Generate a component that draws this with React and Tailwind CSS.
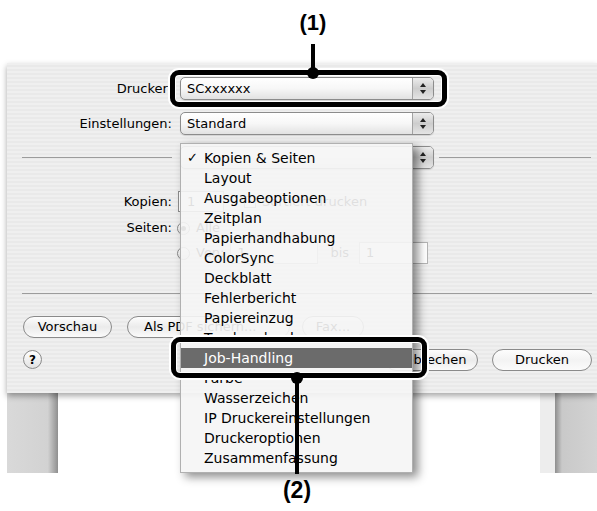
import React from "react";

const menuItems = [
  "Kopien & Seiten",
  "Layout",
  "Ausgabeoptionen",
  "Zeitplan",
  "Papierhandhabung",
  "ColorSync",
  "Deckblatt",
  "Fehlerbericht",
  "Papiereinzug",
  "Tandemdruck",
  "Job-Handling",
  "Farbe",
  "Wasserzeichen",
  "IP Druckereinstellungen",
  "Druckeroptionen",
  "Zusammenfassung",
];

function UpDown() {
  return (
    <svg width="6" height="11" viewBox="0 0 6 11">
      <path d="M3 0 L6 4 L0 4 Z" fill="#222" />
      <path d="M0 7 L6 7 L3 11 Z" fill="#222" />
    </svg>
  );
}

function Popup({ children }) {
  return (
    <div className="flex h-[23px] w-[254px] rounded-[5px] border border-[#8c8c8c] bg-gradient-to-b from-white via-[#f7f7f7] to-[#e2e2e2] shadow-[0_1px_1px_rgba(0,0,0,0.12)]">
      <div className="flex flex-1 items-center pl-[6px] text-[13px]">{children}</div>
      <div className="flex w-[21px] items-center justify-center rounded-r-[4px] border-l border-[#a2a2a2] bg-gradient-to-b from-[#ececec] via-[#cdcdcd] to-[#e4e4e4]">
        <UpDown />
      </div>
    </div>
  );
}

function Pill({ children, className = "" }) {
  return (
    <div
      className={`flex h-[22px] items-center justify-center rounded-full border border-[#8a8a8a] bg-gradient-to-b from-[#fdfdfd] via-[#ebebeb] to-[#fbfbfb] text-[13px] ${className}`}
    >
      {children}
    </div>
  );
}

function Label({ children }) {
  return <div className="w-[165px] text-right text-[13px]">{children}</div>;
}

function Radio({ on }) {
  return (
    <div className="flex h-[13px] w-[13px] items-center justify-center rounded-full border border-[#888] bg-gradient-to-b from-white to-[#dedede]">
      {on && <div className="h-[5px] w-[5px] rounded-full bg-[#333]" />}
    </div>
  );
}

function Panel() {
  return (
    <div className="relative z-10 ml-[7px] h-[330px] w-[590px] bg-[repeating-linear-gradient(0deg,#efefef_0px,#efefef_2px,#e9e9e9_2px,#e9e9e9_4px)] pt-[14px] shadow-[0_3px_6px_rgba(0,0,0,0.35)]">
      <div className="flex items-center">
        <Label>Drucker:</Label>
        <div className="ml-[8px]">
          <Popup>SCxxxxxx</Popup>
        </div>
      </div>
      <div className="mt-[12px] flex items-center">
        <Label>Einstellungen:</Label>
        <div className="ml-[8px]">
          <Popup>Standard</Popup>
        </div>
      </div>
      {/* the open menu covers this popup's value */}
      <div className="mt-[11px] flex items-center">
        <div className="flex w-[165px] items-center">
          <div className="ml-[15px] h-px flex-1 bg-[#9c9c9c]" />
        </div>
        <div className="ml-[8px]">
          <Popup />
        </div>
        <div className="ml-[5px] mr-[6px] h-px flex-1 bg-[#9c9c9c]" />
      </div>

      <div className="mt-[22px] flex h-[21px] items-center">
        <Label>Kopien:</Label>
        <div className="ml-[6px] flex h-[21px] w-[46px] items-center border border-[#8c8c8c] bg-white pl-[8px] text-[13px]">1</div>
        <div className="ml-[20px] h-[12px] w-[12px] border border-[#888] bg-white" />
        <div className="ml-[6px] text-[13px]">Sortiert drucken</div>
      </div>
      <div className="mt-[6px] flex h-[20px] items-center">
        <Label>Seiten:</Label>
        <div className="ml-[5px]">
          <Radio on />
        </div>
        <div className="ml-[6px] text-[13px]">Alle</div>
      </div>
      <div className="mt-[4px] flex h-[22px] items-center">
        <div className="w-[165px]" />
        <div className="ml-[5px]">
          <Radio />
        </div>
        <div className="ml-[6px] text-[13px]">Von:</div>
        <div className="ml-[6px] flex h-[22px] w-[88px] items-center border border-[#b4b4b4] bg-white pl-[6px] text-[13px]">1</div>
        <div className="ml-[12px] text-[13px]">bis</div>
        <div className="ml-[10px] flex h-[22px] w-[69px] items-center border border-[#b4b4b4] bg-white pl-[6px] text-[13px]">1</div>
      </div>

      <div className="ml-[15px] mr-[5px] mt-[29px] h-px bg-[#9c9c9c]" />

      <div className="mt-[22px] flex h-[22px] items-center">
        <Pill className="ml-[16px] w-[89px]">Vorschau</Pill>
        <Pill className="ml-[15px] w-[163px] justify-start pl-[16px]">Als PDF sichern...</Pill>
        <Pill className="ml-[12px] w-[62px]">Fax...</Pill>
      </div>
      <div className="mt-[10px] flex h-[23px] items-center">
        <div className="ml-[16px] flex h-[19px] w-[19px] items-center justify-center rounded-full border border-[#8a8a8a] bg-gradient-to-b from-white to-[#e2e2e2] text-[12px] font-bold">
          ?
        </div>
        <Pill className="ml-[343px] w-[93px]">Abbrechen</Pill>
        <Pill className="ml-[14px] w-[100px] border-[#6e6e6e] from-[#c9c9c9] via-[#f3f3f3] to-[#cfcfcf]">Drucken</Pill>
      </div>
    </div>
  );
}

function Bottom() {
  return (
    <div className="ml-[7px] flex h-[80px]">
      <div className="w-[51px] bg-[linear-gradient(to_right,#d9d9d9_0%,#d2d2d2_80%,#8f8f8f_100%)]" />
      <div className="w-[482px] bg-white" />
      <div className="w-[15px] bg-[#ededed]" />
      <div className="flex-1 bg-[linear-gradient(to_right,#8e8e8e_0px,#c9c9c9_7px,#d3d3d3_100%)]" />
    </div>
  );
}

function Menu() {
  return (
    <div className="absolute left-[180px] top-[143px] z-20 h-[330px] w-[233px] border border-[#b0b0b0] bg-[rgba(245,245,245,0.91)] pt-[4px] text-[14px] shadow-[5px_4px_9px_rgba(0,0,0,0.45)]">
      {menuItems.map((item, i) => {
        const active = item === "Job-Handling";
        return (
          <div
            key={item}
            className={`flex h-[20px] items-center pl-[6px] ${active ? "bg-[#6b6b6b] text-white" : ""}`}
          >
            <span className="w-[17px] text-[13px]">{i === 0 ? "\u2713" : ""}</span>
            <span>{item}</span>
          </div>
        );
      })}
    </div>
  );
}

function Callouts() {
  return (
    <>
      <div className="absolute left-[298px] top-[12px] z-30 w-[30px] text-center font-['Liberation_Sans',Arial,sans-serif] text-[22px] font-bold leading-none">
        (1)
      </div>
      <div className="absolute left-[311px] top-[44px] z-30 h-[28px] w-[4px] bg-black" />
      <div className="absolute left-[170px] top-[70px] z-30 h-[37px] w-[277px] rounded-[9px] border-[5px] border-black shadow-[0_0_0_2px_#fff,inset_0_0_0_1px_#fff]" />
      <div className="absolute left-[307px] top-[67px] z-30 h-[12px] w-[12px] rounded-full bg-black" />

      <div className="absolute left-[171px] top-[337px] z-30 h-[41px] w-[256px] rounded-[9px] border-[5px] border-black shadow-[0_0_0_2px_#fff,inset_0_0_0_1px_#fff]" />
      <div className="absolute left-[291px] top-[372px] z-30 h-[12px] w-[12px] rounded-full bg-black" />
      <div className="absolute left-[295px] top-[378px] z-30 h-[96px] w-[4px] bg-black" />
      <div className="absolute left-[280px] top-[479px] z-30 w-[34px] text-center font-['Liberation_Sans',Arial,sans-serif] text-[23px] font-bold leading-none">
        (2)
      </div>
    </>
  );
}

export default function App() {
  return (
    <div className="relative h-[511px] w-[597px] overflow-hidden bg-white font-['DejaVu_Sans',sans-serif] text-black">
      <div className="h-[63px]" />
      <Panel />
      <Bottom />
      <Menu />
      <Callouts />
    </div>
  );
}
